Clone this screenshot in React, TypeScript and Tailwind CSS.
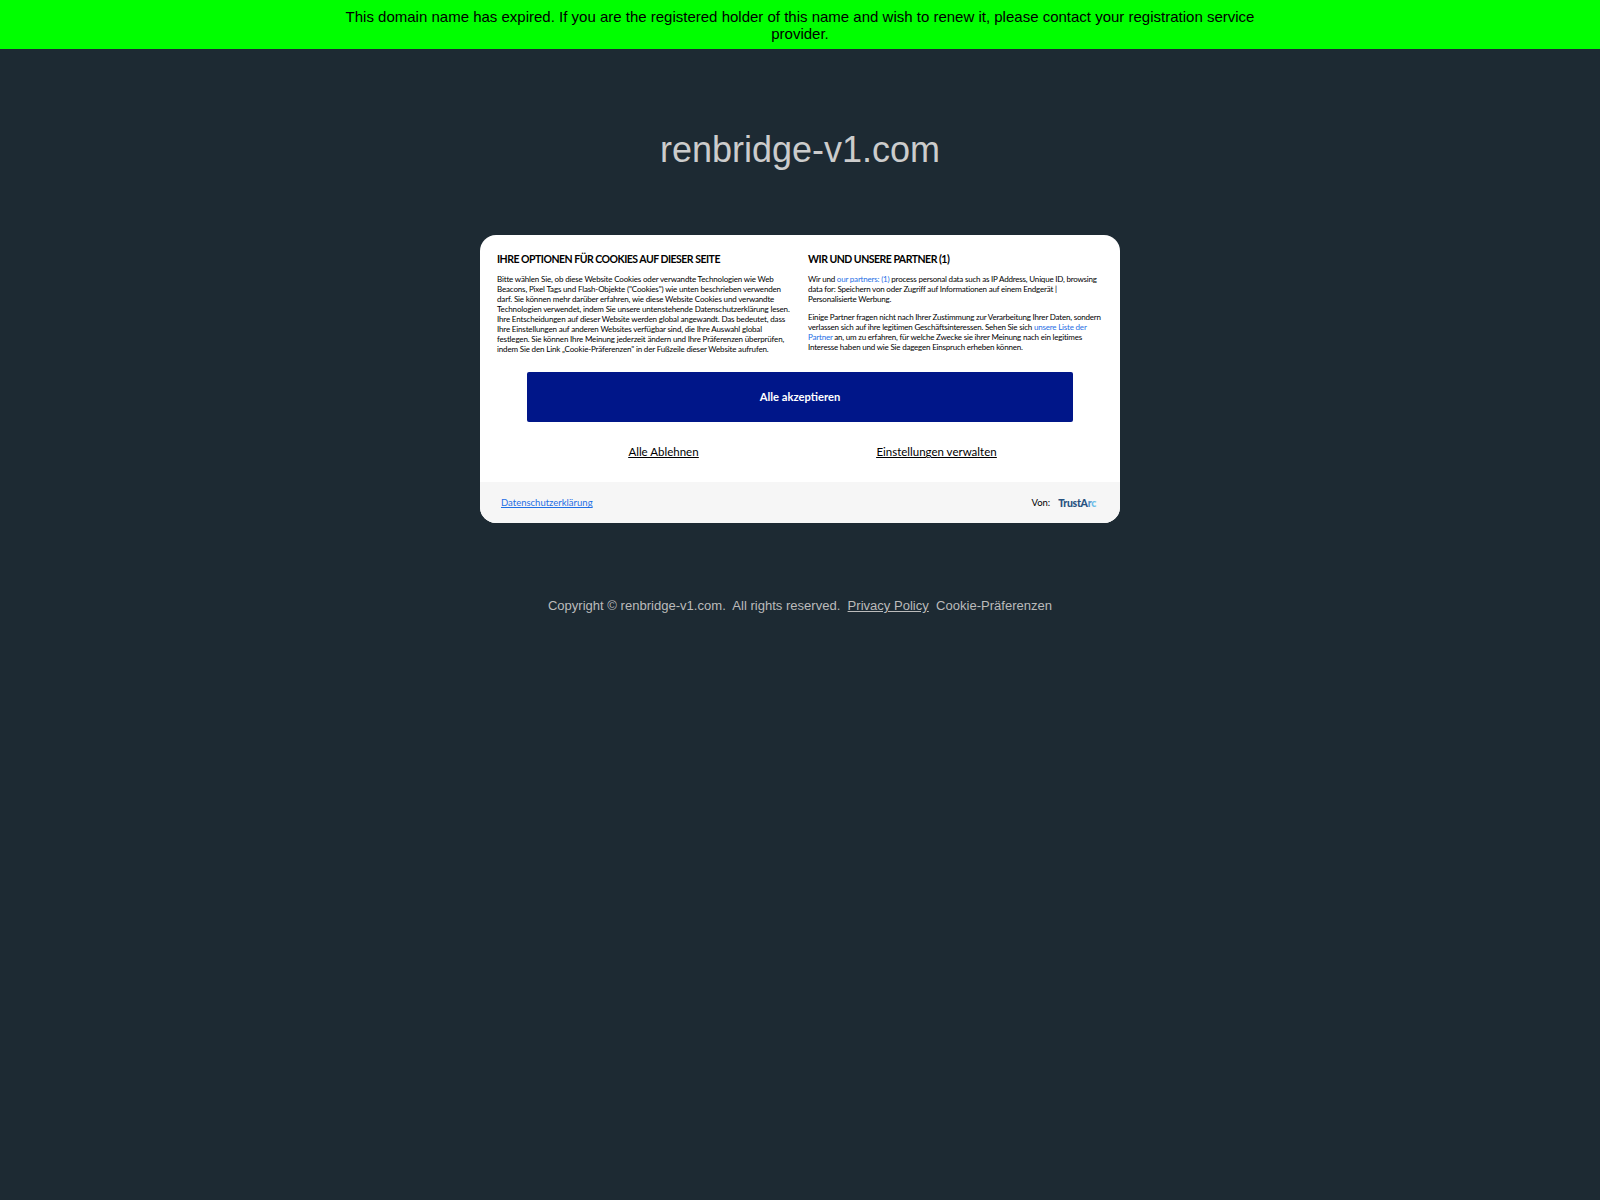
const cardFont = "font-['Lato','Noto_Sans',sans-serif]";

export default function App() {
  return (
    <div className="min-h-[1200px] bg-[#1d2a33] font-['Liberation_Sans',Arial,sans-serif]">
      <div className="flex h-[49px] justify-center bg-[#00ff00] pt-[8px] text-center text-black">
        <p className="w-[960px] text-[15px] leading-[17px]">
          This domain name has expired. If you are the registered holder of this name and wish to renew it, please contact your registration service provider.
        </p>
      </div>

      <h1 className="mt-[80px] text-center text-4xl leading-[42px] text-[#cccccc]">renbridge-v1.com</h1>

      <div className={`mx-auto mt-[64px] w-[640px] overflow-hidden rounded-[16px] bg-white text-black ${cardFont}`}>
        <div className="grid grid-cols-2 gap-4 px-[17px] pt-[17px]">
          <div>
            <h2 className="text-[10.5px] leading-[14px] font-bold tracking-[-0.5px]">IHRE OPTIONEN FÜR COOKIES AUF DIESER SEITE</h2>
            <p className="mt-2 text-[8px] leading-[10px] tracking-[-0.16px]">
              Bitte wählen Sie, ob diese Website Cookies oder verwandte Technologien wie Web Beacons, Pixel Tags und Flash-Objekte ("Cookies") wie unten beschrieben verwenden darf. Sie können mehr darüber erfahren, wie diese Website Cookies und verwandte Technologien verwendet, indem Sie unsere untenstehende Datenschutzerklärung lesen. Ihre Entscheidungen auf dieser Website werden global angewandt. Das bedeutet, dass Ihre Einstellungen auf anderen Websites verfügbar sind, die Ihre Auswahl global festlegen. Sie können Ihre Meinung jederzeit ändern und Ihre Präferenzen überprüfen, indem Sie den Link „Cookie-Präferenzen" in der Fußzeile dieser Website aufrufen.
            </p>
          </div>
          <div>
            <h2 className="text-[10.5px] leading-[14px] font-bold tracking-[-0.5px]">WIR UND UNSERE PARTNER (1)</h2>
            <p className="mt-2 text-[8px] leading-[10px] tracking-[-0.2px]">
              Wir und <a className="text-[#1f6fe5]">our partners: (1)</a> process personal data such as IP Address, Unique ID, browsing data for: Speichern von oder Zugriff auf Informationen auf einem Endgerät | Personalisierte Werbung.
            </p>
            <p className="mt-2 text-[8px] leading-[10px] tracking-[-0.2px]">
              Einige Partner fragen nicht nach Ihrer Zustimmung zur Verarbeitung Ihrer Daten, sondern verlassen sich auf ihre legitimen Geschäftsinteressen. Sehen Sie sich <a className="text-[#1f6fe5]">unsere Liste der Partner</a> an, um zu erfahren, für welche Zwecke sie ihrer Meinung nach ein legitimes Interesse haben und wie Sie dagegen Einspruch erheben können.
            </p>
          </div>
        </div>

        <div className="mx-[47px] mt-[18px] flex h-[50px] items-center justify-center rounded-[2px] bg-[#001689] pt-px text-[11.2px] font-bold text-white">
          Alle akzeptieren
        </div>

        <div className="grid h-[60px] grid-cols-2 items-center px-[47px] text-center text-[11.5px] underline">
          <a>Alle Ablehnen</a>
          <a>Einstellungen verwalten</a>
        </div>

        <div className="flex h-[41px] items-center justify-between bg-[#f6f6f6] pt-[2px] pr-[24px] pl-[21px] text-[9.5px]">
          <a className="text-[#1f6fe5] underline">Datenschutzerklärung</a>
          <div className="flex items-center gap-2">
            <span>Von:</span>
            <span className="text-[10.5px] font-black tracking-[-0.3px] text-[#27517f]">TrustA<span className="text-[#4f8fc4]">r</span><span className="text-[#6cc0ea]">c</span></span>
          </div>
        </div>
      </div>

      <p className="mt-[75px] text-center text-[13.05px] leading-[16px] whitespace-pre text-[#bbbbbb]">
        {"Copyright © renbridge-v1.com.  All rights reserved.  "}<a className="underline">Privacy Policy</a>{"  Cookie-Präferenzen"}
      </p>
    </div>
  );
}
